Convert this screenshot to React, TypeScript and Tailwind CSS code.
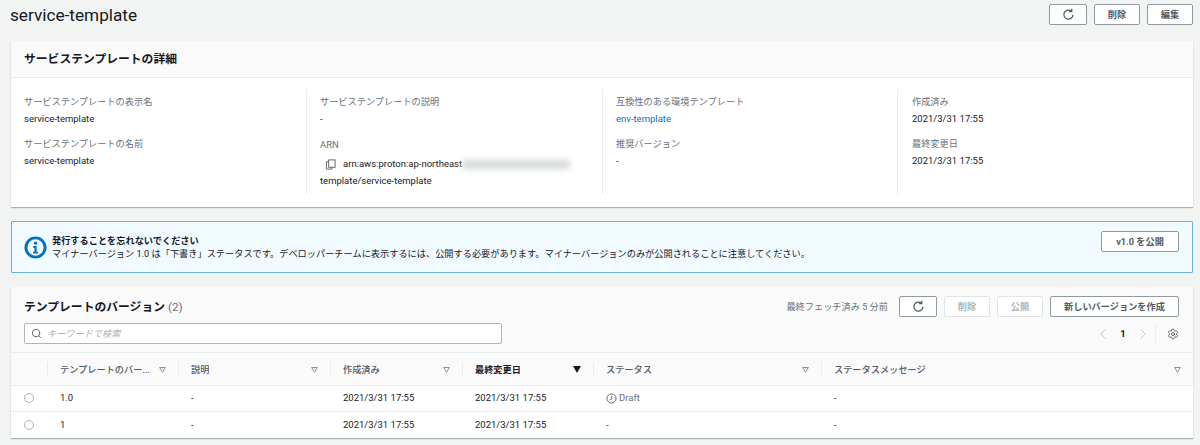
import React from "react";
import { Search, Settings, ChevronLeft, ChevronRight } from "lucide-react";

const font = "font-['Roboto','Noto_Sans_CJK_JP',sans-serif]";

function Refresh({ size = 13 }: { size?: number }) {
  return (
    <svg width={size} height={size} viewBox="0 0 16 16" fill="none" stroke="#545b64" strokeWidth="1.6">
      <path d="M13.5 8.5a5.6 5.6 0 1 1-2.2-4.8" />
      <path d="M12 0.8v3.6H8.5" />
    </svg>
  );
}

function Btn({ children, w, disabled }: { children: React.ReactNode; w: string; disabled?: boolean }) {
  return (
    <div
      className={`${w} h-[21px] flex items-center justify-center rounded-[2px] bg-white border text-[9.2px] font-bold ${
        disabled ? "border-[#e1e4e4] text-[#aab7b8]" : "border-[#8f9a9b] text-[#545b64]"
      }`}
    >
      {children}
    </div>
  );
}

function Field({ label, children, h }: { label: string; children: React.ReactNode; h: string }) {
  return (
    <div className={h}>
      <div className="text-[9.2px] leading-[14px] text-[#687078]">{label}</div>
      <div className="mt-[3px] text-[9.5px] leading-[14px] text-[#16191f]">{children}</div>
    </div>
  );
}

function Filter({ filled }: { filled?: boolean }) {
  return filled ? (
    <svg width="8" height="7" viewBox="0 0 8 7"><path d="M0 0h8L4 7z" fill="#16191f" /></svg>
  ) : (
    <svg width="7" height="6" viewBox="0 0 7 6" fill="none"><path d="M.6.5h5.8L3.5 5.3z" stroke="#7c878a" strokeWidth="0.9" /></svg>
  );
}

const cols = "grid grid-cols-[36px_131px_152px_132px_131px_228px_372px]";

function Head({ label, bold, filled, last }: { label: string; bold?: boolean; filled?: boolean; last?: boolean }) {
  return (
    <div className="flex items-center justify-between h-full pl-[13px] pr-[12px] pt-[1px] relative">
      <span className={`text-[9.2px] truncate ${bold ? "font-bold text-[#16191f]" : "font-medium text-[#545b64]"}`}>{label}</span>
      <Filter filled={filled} />
      {!last && <span className="absolute right-[-1px] top-[9px] bottom-[9px] w-px bg-[#eaeded]" />}
    </div>
  );
}

function Row({ v, status, time }: { v: string; status: React.ReactNode; time?: boolean }) {
  const c = "pl-[13px] text-[9.5px] text-[#16191f] flex items-center";
  return (
    <div className={`${cols} h-[26px] ${time ? "border-b border-[#eaeded]" : ""}`}>
      <div className="flex items-center pl-[13px] pb-[1px]">
        <span className="w-[10px] h-[10px] rounded-full border border-[#aab7b8] bg-white" />
      </div>
      <div className={c}>{v}</div>
      <div className={c}>-</div>
      <div className={c}>2021/3/31 17:55</div>
      <div className={c}>2021/3/31 17:55</div>
      <div className={c}>{status}</div>
      <div className={c}>-</div>
    </div>
  );
}

export default function App() {
  return (
    <div className={`${font} w-[1200px] h-[445px] overflow-hidden bg-[#f2f3f3] text-[#16191f]`}>
      <div className="h-[41px] pl-[10px] pr-[7px] flex justify-between items-start">
        <h1 className="text-[17.2px] leading-[30px] text-[#16191f]">service-template</h1>
        <div className="flex gap-[7px] mt-[4px]">
          <Btn w="w-[38px]"><Refresh /></Btn>
          <Btn w="w-[46px]">削除</Btn>
          <Btn w="w-[46px]">編集</Btn>
        </div>
      </div>

      <section className="ml-[11px] w-[1182px] h-[166px] bg-white shadow-[0_1px_1px_0_rgba(0,28,36,0.3)]">
        <div className="h-[37px] bg-[#fafafa] border-b border-[#eaeded] pl-[13px] pt-[2px] flex items-center">
          <h2 className="text-[11.8px] font-bold">サービステンプレートの詳細</h2>
        </div>
        <div className="grid grid-cols-[296px_296px_295px_295px] pt-[11px]">
          <div className="h-[105px] pl-[13px] pt-[6px] border-r border-[#eaeded]">
            <Field label="サービステンプレートの表示名" h="h-[42px]">service-template</Field>
            <Field label="サービステンプレートの名前" h="">service-template</Field>
          </div>
          <div className="h-[105px] pl-[13px] pt-[6px] border-r border-[#eaeded]">
            <Field label="サービステンプレートの説明" h="h-[43px]">-</Field>
            <div className="text-[9.5px] leading-[14px] text-[#687078]">ARN</div>
            <div className="mt-[5px] text-[9.5px] leading-[14px] flex items-center">
              <svg width="11" height="11" viewBox="0 0 12 12" fill="none" stroke="#545b64" strokeWidth="1" className="ml-[5px] mr-[7px]">
                <rect x="4" y="1" width="7" height="8" />
                <path d="M4 3H1.5v8h6V9" />
              </svg>
              <span>arn:aws:proton:ap-northeast</span>
              <span className="w-[108px] h-[9px] bg-[#d5d8da] blur-[3px]" />
            </div>
            <div className="mt-[3px] text-[9.5px] leading-[14px]">template/service-template</div>
          </div>
          <div className="h-[105px] pl-[13px] pt-[6px] border-r border-[#eaeded]">
            <Field label="互換性のある環境テンプレート" h="h-[42px]"><span className="text-[#0073bb]">env-template</span></Field>
            <Field label="推奨バージョン" h="">-</Field>
          </div>
          <div className="h-[105px] pl-[14px] pt-[6px]">
            <Field label="作成済み" h="h-[42px]">2021/3/31 17:55</Field>
            <Field label="最終変更日" h="">2021/3/31 17:55</Field>
          </div>
        </div>
      </section>

      <section className="ml-[11px] mt-[14px] w-[1182px] h-[52px] border border-[#68b2e3] bg-[#f1faff] rounded-[1px] flex pl-[12px] pr-[13px] justify-between">
        <div className="flex items-center gap-[5px]">
          <svg width="23" height="23" viewBox="0 0 24 24" fill="none">
            <circle cx="12" cy="12" r="10" stroke="#0073bb" strokeWidth="3" />
            <circle cx="12" cy="7.5" r="1.7" fill="#0073bb" />
            <path d="M9.5 10.5h3.7v6h1.6v1.7H9.5v-1.7h1.4v-4.3H9.5z" fill="#0073bb" />
          </svg>
          <div>
            <div className="text-[9.2px] leading-[13px] font-bold">発行することを忘れないでください</div>
            <div className="text-[9.2px] leading-[13px]">マイナーバージョン 1.0 は「下書き」ステータスです。デベロッパーチームに表示するには、公開する必要があります。マイナーバージョンのみが公開されることに注意してください。</div>
          </div>
        </div>
        <div className="mt-[9px]">
          <Btn w="w-[78px]">v1.0 を公開</Btn>
        </div>
      </section>

      <section className="ml-[11px] mt-[14px] w-[1182px] h-[151px] bg-white shadow-[0_1px_1px_0_rgba(0,28,36,0.3)]">
        <div className="h-[66px] bg-[#fafafa] border-b border-[#eaeded] pl-[13px] pr-[14px] flex justify-between">
          <div className="pt-[10px]">
            <h2 className="text-[11.8px] leading-[20px] font-bold">
              テンプレートのバージョン <span className="font-normal text-[#687078]">(2)</span>
            </h2>
            <div className="mt-[6px] w-[478px] h-[21px] bg-white border border-[#aab7b8] rounded-[2px] flex items-center pl-[6px] gap-[5px]">
              <Search size={11} color="#545b64" strokeWidth={2} />
              <span className="text-[9.2px] italic text-[#aab7b8]">キーワードで検索</span>
            </div>
          </div>
          <div className="flex flex-col items-end pt-[9px]">
            <div className="flex items-center">
              <span className="text-[9.2px] text-[#687078] mr-[11px]">最終フェッチ済み 5 分前</span>
              <div className="flex gap-[7px]">
                <Btn w="w-[38px]"><Refresh /></Btn>
                <Btn w="w-[46px]" disabled>削除</Btn>
                <Btn w="w-[46px]" disabled>公開</Btn>
                <Btn w="w-[129px]">新しいバージョンを作成</Btn>
              </div>
            </div>
            <div className="flex items-center mt-[6px] h-[22px]">
              <ChevronLeft size={18} color="#aab7b8" strokeWidth={1} />
              <span className="mx-[7px] w-[8px] text-center text-[9.5px] font-bold">1</span>
              <ChevronRight size={18} color="#aab7b8" strokeWidth={1} />
              <span className="h-[22px] w-px bg-[#eaeded] ml-[3px] mr-[11px]" />
              <Settings size={12} color="#545b64" strokeWidth={1.75} />
            </div>
          </div>
        </div>
        <div className={`${cols} h-[33px] bg-[#fafafa] border-b border-[#eaeded]`}>
          <div className="relative"><span className="absolute right-[-1px] top-[9px] bottom-[9px] w-px bg-[#eaeded]" /></div>
          <Head label="テンプレートのバー..." />
          <Head label="説明" />
          <Head label="作成済み" />
          <Head label="最終変更日" bold filled />
          <Head label="ステータス" />
          <Head label="ステータスメッセージ" last />
        </div>
        <Row
          v="1.0"
          time
          status={
            <span className="flex items-center gap-[2px] text-[#687078]">
              <svg width="11" height="11" viewBox="0 0 12 12" fill="none" stroke="#545b64" strokeWidth="1">
                <circle cx="6" cy="6" r="5" />
                <path d="M6.3 3v3.4L3.8 7.8" />
              </svg>
              Draft
            </span>
          }
        />
        <Row v="1" status="-" />
      </section>
    </div>
  );
}
